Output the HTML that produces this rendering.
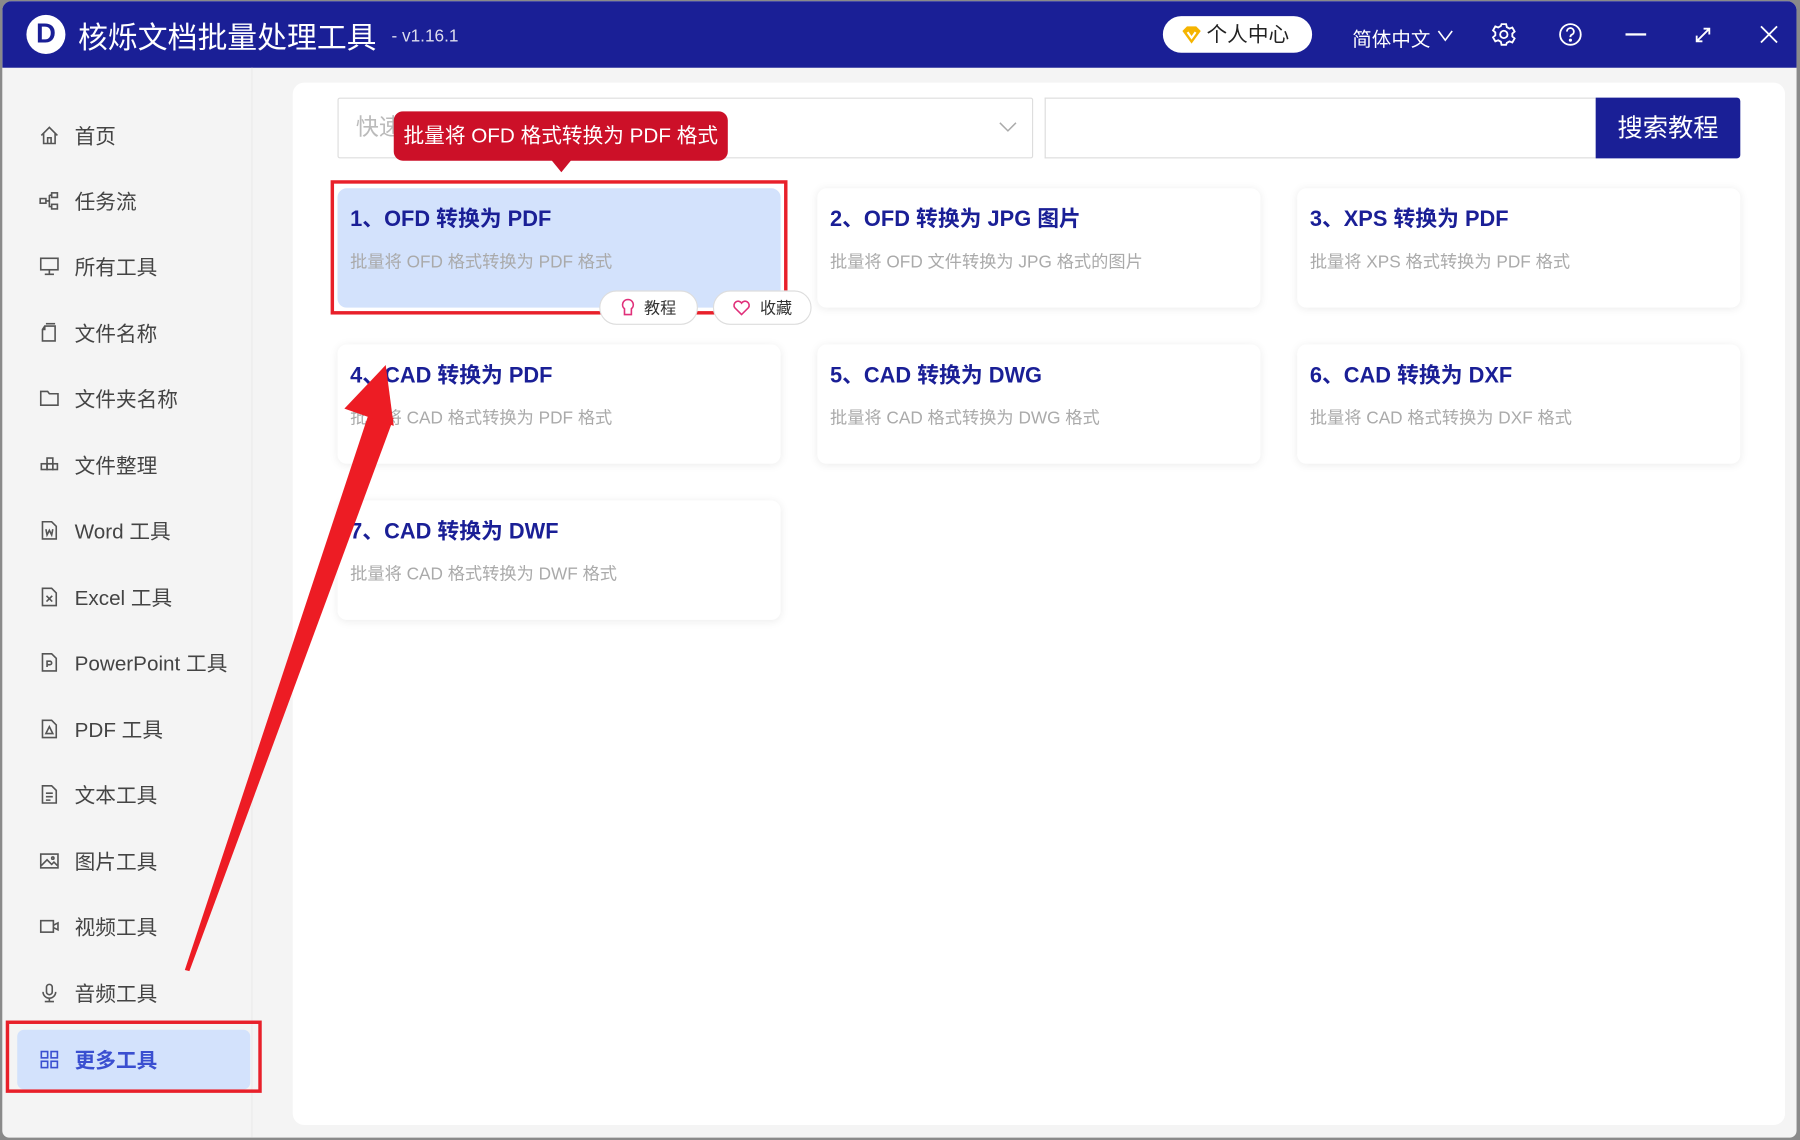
<!DOCTYPE html>
<html><head><meta charset="utf-8"><style>
*{margin:0;padding:0;box-sizing:border-box}
html,body{width:1800px;height:1140px;overflow:hidden;background:#8a8a8a}
#w{position:absolute;left:0;top:0;width:1568px;height:993px;transform:scale(1.14796);transform-origin:0 0;font-family:"Liberation Sans","Noto Sans CJK SC",sans-serif}
.win{position:absolute;left:2px;top:1px;width:1563px;height:990px;background:#f4f4f4;border-radius:8px 8px 6px 6px;overflow:hidden}
.tb{position:absolute;left:0;top:0;right:0;height:58px;background:#1a1f96}
.ab{position:absolute}
.side{position:absolute;left:0;top:58px;width:218px;bottom:0;border-right:1px solid #ebebeb}
.it{position:absolute;left:32px;height:30px;font-size:18px;color:#444;display:flex;align-items:center}
.it svg{width:18px;height:18px;margin-right:13px;stroke:#555;fill:none;stroke-width:1.4}
.main{position:absolute;left:253px;top:71px;width:1300px;height:908px;background:#fff;border-radius:10px}
.card{position:absolute;width:386px;height:104px;background:#fff;border-radius:8px;box-shadow:0 1px 8px rgba(0,0,0,.08)}
.card b{position:absolute;left:11px;top:12px;font-size:19px;color:#1a1f96}
.card span{position:absolute;left:11px;top:53px;font-size:15px;color:#aaa}
.pill{position:absolute;height:30px;border:1px solid #ddd;border-radius:15px;background:#fff;font-size:14px;color:#333;display:flex;align-items:center;justify-content:center;gap:8px}
</style></head><body><div id="w">
<div class="win">
<div class="tb">
 <div class="ab" style="left:21px;top:12px;width:34px;height:34px;border-radius:50%;background:#fff"></div>
 <div class="ab" style="left:21px;top:12px;width:34px;height:34px;font:bold 24px 'Liberation Sans';color:#1a1f96;text-align:center;line-height:34px">D</div>
 <div class="ab" style="left:66px;top:12px;font-size:26px;color:#fff">核烁文档批量处理工具</div>
 <div class="ab" style="left:339px;top:22px;font-size:15px;color:#dde">- v1.16.1</div>
 <div class="ab" style="left:1011px;top:13px;width:130px;height:32px;background:#fff;border-radius:16px;font-size:18px;color:#222;line-height:32px;padding-left:38px">个人中心</div>
 <svg class="ab" style="left:1027px;top:21px" width="18" height="17" viewBox="0 0 18 17"><path d="M1 5 L5 1 H13 L17 5 L9 16Z" fill="#f5b400"/><path d="M5.5 6 L9 11 L12.5 6" stroke="#fff" stroke-width="1.8" fill="none"/></svg>
 <div class="ab" style="left:1176px;top:19px;font-size:17px;color:#fff">简体中文</div>
 <svg class="ab" style="left:1250px;top:24px" width="14" height="12"><path d="M1 2 L7 10 L13 2" stroke="#fff" stroke-width="1.4" fill="none"/></svg>
 <svg class="ab" style="left:1297px;top:18px" width="22" height="22" viewBox="0 0 22 22" fill="none" stroke="#fff" stroke-width="1.6"><circle cx="11" cy="11" r="3.2"/><path d="M9 2h4l.6 2.6 2.3 1.3 2.5-.9 2 3.5-2 1.7v2.6l2 1.7-2 3.5-2.5-.9-2.3 1.3L13 20H9l-.6-2.6-2.3-1.3-2.5.9-2-3.5 2-1.7V9.2l-2-1.7 2-3.5 2.5.9 2.3-1.3z"/></svg>
 <svg class="ab" style="left:1355px;top:18px" width="22" height="22" fill="none" stroke="#fff" stroke-width="1.6"><circle cx="11" cy="11" r="9"/><path d="M8 8.5a3 3 0 1 1 4 2.8c-.8.4-1 1-1 2"/><circle cx="11" cy="16" r=".6" fill="#fff"/></svg>
 <div class="ab" style="left:1414px;top:28px;width:18px;height:2px;background:#fff"></div>
 <svg class="ab" style="left:1473px;top:21px" width="17" height="17" stroke="#fff" stroke-width="1.6" fill="none"><path d="M3 14 L14 3 M9 3h5v5 M3 9v5h5"/></svg>
 <svg class="ab" style="left:1530px;top:20px" width="18" height="18" stroke="#fff" stroke-width="1.6"><path d="M2 2 L16 16 M16 2 L2 16"/></svg>
</div>
<div class="side">
 <div class="it" style="top:44px"><svg viewBox="0 0 18 18"><path d="M2 9 L9 2 L16 9 M4 7v9h10V7 M7.5 16v-5h3v5"/></svg>首页</div>
 <div class="it" style="top:101px"><svg viewBox="0 0 18 18"><rect x="1" y="7" width="5" height="4"/><rect x="11" y="2" width="5" height="4"/><rect x="11" y="12" width="5" height="4"/><path d="M6 9h3M9 4v10h2M9 4h2"/></svg>任务流</div>
 <div class="it" style="top:158px"><svg viewBox="0 0 18 18"><rect x="1.5" y="2" width="15" height="10"/><path d="M9 12v4M5 16h8"/></svg>所有工具</div>
 <div class="it" style="top:216px"><svg viewBox="0 0 18 18"><path d="M5 3h9v13H3V6z M5 3v3H3 M6 1h8"/></svg>文件名称</div>
 <div class="it" style="top:273px"><svg viewBox="0 0 18 18"><path d="M1.5 3h6l1.5 2h7.5v10h-15z"/></svg>文件夹名称</div>
 <div class="it" style="top:331px"><svg viewBox="0 0 18 18"><rect x="2" y="8" width="5" height="5"/><rect x="7" y="8" width="5" height="5"/><rect x="12" y="8" width="4" height="5"/><rect x="7" y="3" width="5" height="5"/></svg>文件整理</div>
 <div class="it" style="top:388px"><svg viewBox="0 0 18 18"><path d="M3 1.5h8l4 4v11H3z M6 8l1 5 2-4 2 4 1-5"/></svg>Word 工具</div>
 <div class="it" style="top:446px"><svg viewBox="0 0 18 18"><path d="M3 1.5h8l4 4v11H3z M6.5 8l5 5 M11.5 8l-5 5"/></svg>Excel 工具</div>
 <div class="it" style="top:503px"><svg viewBox="0 0 18 18"><path d="M3 1.5h8l4 4v11H3z M7 13V8h2.5a1.5 1.5 0 0 1 0 3H7"/></svg>PowerPoint 工具</div>
 <div class="it" style="top:561px"><svg viewBox="0 0 18 18"><path d="M3 1.5h8l4 4v11H3z M6 13l3-6 3 6z"/></svg>PDF 工具</div>
 <div class="it" style="top:618px"><svg viewBox="0 0 18 18"><path d="M3 1.5h8l4 4v11H3z M6 8h6M6 11h6M6 14h4"/></svg>文本工具</div>
 <div class="it" style="top:676px"><svg viewBox="0 0 18 18"><rect x="1.5" y="3" width="15" height="12"/><path d="M2 13l5-5 4 4 2-2 3 3"/><circle cx="12" cy="6.5" r="1"/></svg>图片工具</div>
 <div class="it" style="top:733px"><svg viewBox="0 0 18 18"><rect x="1.5" y="4" width="11" height="10"/><path d="M12.5 8l4-2v6l-4-2"/></svg>视频工具</div>
 <div class="it" style="top:791px"><svg viewBox="0 0 18 18"><rect x="6.5" y="1.5" width="5" height="9" rx="2.5"/><path d="M3.5 8a5.5 5.5 0 0 0 11 0M9 13.5v3M5 16.5h8"/></svg>音频工具</div>
 <div class="ab" style="left:13px;top:838px;width:203px;height:52px;background:#d3e2fc;border-radius:6px"></div>
 <div class="it" style="top:849px;color:#3a4fd0;font-weight:bold"><svg viewBox="0 0 18 18" style="stroke:#3a4fd0"><rect x="2" y="2" width="5.5" height="5.5"/><rect x="10.5" y="2" width="5.5" height="5.5"/><rect x="2" y="10.5" width="5.5" height="5.5"/><rect x="10.5" y="10.5" width="5.5" height="5.5"/></svg>更多工具</div>
</div>
<div class="main">
 <div class="ab" style="left:39px;top:13px;width:606px;height:53px;border:1px solid #ddd;border-radius:2px;font-size:20px;color:#bbb;line-height:51px;padding-left:15px">快速</div>
 <svg class="ab" style="left:615px;top:34px" width="16" height="10"><path d="M1 1 L8 8 L15 1" stroke="#aaa" stroke-width="1.3" fill="none"/></svg>
 <div class="ab" style="left:655px;top:13px;width:480px;height:53px;border:1px solid #ddd;border-right:none"></div>
 <div class="ab" style="left:1135px;top:13px;width:126px;height:53px;background:#1a1f96;border-radius:0 3px 3px 0;color:#fff;font-size:22px;text-align:center;line-height:53px">搜索教程</div>
 <div class="card" style="left:39px;top:92px;background:#d3e2fc;box-shadow:none"><b>1、OFD 转换为 PDF</b><span>批量将 OFD 格式转换为 PDF 格式</span></div>
 <div class="card" style="left:457px;top:92px"><b>2、OFD 转换为 JPG 图片</b><span>批量将 OFD 文件转换为 JPG 格式的图片</span></div>
 <div class="card" style="left:875px;top:92px"><b>3、XPS 转换为 PDF</b><span>批量将 XPS 格式转换为 PDF 格式</span></div>
 <div class="card" style="left:39px;top:228px"><b>4、CAD 转换为 PDF</b><span>批量将 CAD 格式转换为 PDF 格式</span></div>
 <div class="card" style="left:457px;top:228px"><b>5、CAD 转换为 DWG</b><span>批量将 CAD 格式转换为 DWG 格式</span></div>
 <div class="card" style="left:875px;top:228px"><b>6、CAD 转换为 DXF</b><span>批量将 CAD 格式转换为 DXF 格式</span></div>
 <div class="card" style="left:39px;top:364px"><b>7、CAD 转换为 DWF</b><span>批量将 CAD 格式转换为 DWF 格式</span></div>
 <div class="ab" style="left:33px;top:85px;width:398px;height:117px;border:3px solid #e8202a"></div>
 <div class="pill" style="left:267px;top:181px;width:86px"><svg width="12" height="16"><path d="M6 1a4.5 4.5 0 0 0-3 8v5h6V9a4.5 4.5 0 0 0-3-8z" stroke="#e0307a" stroke-width="1.4" fill="none"/></svg>教程</div>
 <div class="pill" style="left:366px;top:181px;width:86px"><svg width="16" height="14"><path d="M8 13 L2 7a3.3 3.3 0 0 1 6-4 3.3 3.3 0 0 1 6 4z" stroke="#e0307a" stroke-width="1.4" fill="none"/></svg>收藏</div>
 <div class="ab" style="left:88px;top:25px;width:291px;height:43px;background:#cc1028;border-radius:8px;color:#fff;font-size:18px;line-height:43px;text-align:center">批量将 OFD 格式转换为 PDF 格式</div>
 <div class="ab" style="left:225px;top:67px;width:0;height:0;border-left:9px solid transparent;border-right:9px solid transparent;border-top:11px solid #cc1028"></div>
</div>
<div class="ab" style="left:3px;top:888px;width:223px;height:63px;border:3px solid #e8202a"></div>
</div>
<svg class="ab" style="left:0;top:0" width="1568" height="993"><polygon points="161,845 165,846 343,364 322,358" fill="#ed1c24"/><polygon points="336,318 300,356 343,371" fill="#ed1c24"/></svg>
</div></body></html>
